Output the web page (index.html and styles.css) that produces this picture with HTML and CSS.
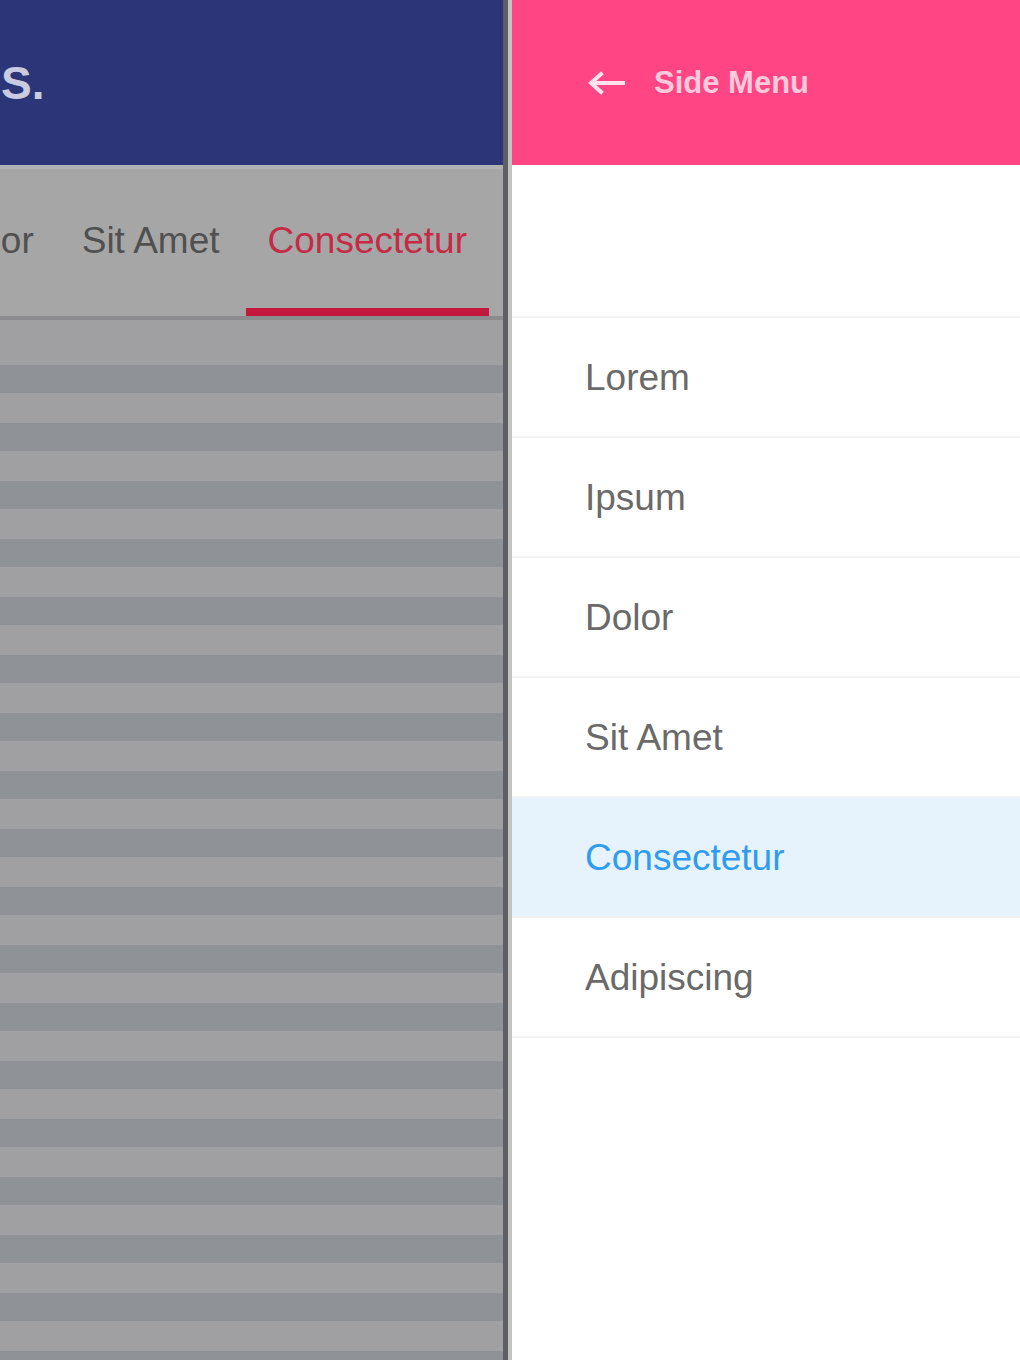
FILE: index.html
```html
<!DOCTYPE html>
<html>
<head>
<title>Side Menu</title>
<link rel="stylesheet" href="styles.css">
</head>
<body>
<div class="screen">
  <div class="main">
    <div class="appbar">
      <span class="app-title">TABS.</span>
    </div>
    <div class="tabs">
      <div class="tab">Lorem</div>
      <div class="tab">Ipsum</div>
      <div class="tab">Dolor</div>
      <div class="tab">Sit Amet</div>
      <div class="tab active">Consectetur</div>
    </div>
    <div class="list"></div>
  </div>

  <div class="drawer">
    <div class="drawer-head">
      <svg class="back" width="40" height="28" viewBox="0 0 40 28">
        <path d="M37 14H6M15 5L5 14L15 23" fill="none" stroke="#fff" stroke-width="4" stroke-linecap="square"/>
      </svg>
      <span class="drawer-title">Side Menu</span>
    </div>
    <div class="drawer-space"></div>
    <ul class="menu">
      <li>Lorem</li>
      <li>Ipsum</li>
      <li>Dolor</li>
      <li>Sit Amet</li>
      <li class="current">Consectetur</li>
      <li>Adipiscing</li>
    </ul>
  </div>
</div>
</body>
</html>
```

FILE: styles.css
```css
body {
  margin: 0;
  font-family: "Liberation Sans", Arial, sans-serif;
}

.screen {
  display: flex;
  height: 1360px;
  overflow: hidden;
}

/* dimmed page behind the drawer */
.main {
  width: 503px;
  flex: none;
  overflow: hidden;
  border-right: 5px solid #5e5f63;
  background: #9fa0a3;
  display: flex;
  flex-direction: column;
}

.appbar {
  height: 165px;
  background: #2b3577;
  display: flex;
  align-items: center;
}

.app-title {
  margin-left: -90px;
  font-size: 46px;
  font-weight: bold;
  color: #c9cce0;
}

.tabs {
  height: 147px;
  background: #a6a6a6;
  border-top: 4px solid #b2b2b2;
  border-bottom: 4px solid #8c8c8e;
  display: flex;
  justify-content: flex-end;
  gap: 4px;
  padding-right: 14px;
}

.tab {
  flex: none;
  display: flex;
  align-items: center;
  padding: 0 22px 4px;
  font-size: 37px;
  color: #505050;
  white-space: nowrap;
}

.tab.active {
  color: #c52b47;
  box-shadow: inset 0 -8px #c4173e;
}

.list {
  flex: 1;
  border-top: 15px solid #a0a0a2;
  background: repeating-linear-gradient(to bottom, #a0a0a2 0 30px, #8f9297 30px 58px);
}

/* drawer */
.drawer {
  flex: 1;
  background: #fff;
  border-left: 4px solid #c2c2c2;
}

.drawer-head {
  height: 165px;
  background: #ff4584;
  display: flex;
  align-items: center;
  padding-left: 74px;
  gap: 28px;
}

.back {
  opacity: 0.85;
}

.drawer-title {
  font-size: 31px;
  font-weight: bold;
  color: rgba(255, 255, 255, 0.72);
}

.drawer-space {
  height: 151px;
  border-bottom: 2px solid #f3f3f3;
}

.menu {
  list-style: none;
  margin: 0;
  padding: 0;
}

.menu li {
  height: 118px;
  display: flex;
  align-items: center;
  padding-left: 73px;
  padding-top: 2px;
  box-sizing: border-box;
  height: 120px;
  border-bottom: 2px solid #f3f3f3;
  font-size: 37px;
  color: #6a6a6a;
}

.menu li.current {
  background: #e6f3fd;
  color: #2f9cf0;
}
```
